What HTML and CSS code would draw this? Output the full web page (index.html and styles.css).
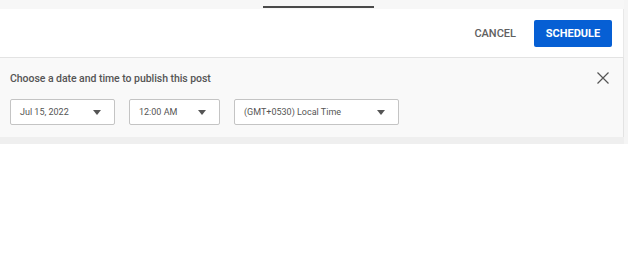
FILE: index.html
```html
<!DOCTYPE html>
<html lang="en">

<head>
    <meta charset="UTF-8">
    <meta name="viewport" content="width=device-width, initial-scale=1.0">
    <title>Schedule Post</title>
    <link rel="stylesheet" href="styles.css">
</head>

<body>
    <div class="frame">
        <div class="sheet">
            <!-- Drag handle -->
            <div class="top-strip">
                <div class="handle"></div>
            </div>

            <!-- Actions -->
            <div class="header">
                <button class="cancel-button">CANCEL</button>
                <button class="schedule-button">SCHEDULE</button>
            </div>

            <!-- Schedule panel -->
            <div class="panel">
                <div class="panel-title-row">
                    <span class="panel-title">Choose a date and time to publish this post</span>
                    <svg class="close-icon" width="12" height="12" viewBox="0 0 12 12">
                        <path d="M0.5 0.5 L11.5 11.5 M11.5 0.5 L0.5 11.5" stroke="#555" stroke-width="1.2" fill="none"/>
                    </svg>
                </div>
                <div class="picker-row">
                    <div class="picker picker-date">
                        <span>Jul 15, 2022</span>
                        <span class="caret"></span>
                    </div>
                    <div class="picker picker-time">
                        <span>12:00 AM</span>
                        <span class="caret"></span>
                    </div>
                    <div class="picker picker-zone">
                        <span>(GMT+0530) Local Time</span>
                        <span class="caret"></span>
                    </div>
                </div>
            </div>
            <div class="bottom-strip"></div>
        </div>
    </div>
</body>

</html>
```

FILE: styles.css
```css
body {
    font-family: Roboto, Arial, sans-serif;
    margin: 0;
    background-color: #fff;
}

.frame {
    background-color: #f5f5f5;
}

.sheet {
    width: 624px;
}

.top-strip {
    height: 9px;
    background-color: #f7f7f7;
    padding-top: 6px;
    box-sizing: border-box;
}

.handle {
    width: 111px;
    height: 2px;
    margin-left: 263px;
    background-color: #4a4a4a;
}

.header {
    height: 48px;
    display: flex;
    align-items: center;
    justify-content: flex-end;
    gap: 8px;
    padding-right: 11px;
    background-color: #fff;
    border-right: 1px solid #e8e8e8;
    border-bottom: 1px solid #e3e3e3;
}

.cancel-button {
    font-family: Roboto, Arial, sans-serif;
    font-size: 11px;
    font-weight: 500;
    color: #606060;
    background: none;
    border: none;
    padding: 0 10px;
    height: 27px;
    cursor: pointer;
}

.schedule-button {
    font-family: Roboto, Arial, sans-serif;
    font-size: 11px;
    font-weight: 700;
    color: #fff;
    background-color: #065fd4;
    border: none;
    border-radius: 2px;
    width: 78px;
    height: 27px;
    padding: 0;
    cursor: pointer;
}

.panel {
    background-color: #f9f9f9;
    border-right: 1px solid #e3e3e3;
    padding: 12px 14px 12px 10px;
}

.panel-title-row {
    display: flex;
    align-items: center;
    justify-content: space-between;
    height: 16px;
    margin-bottom: 13px;
}

.panel-title {
    font-size: 10.5px;
    font-weight: 500;
    letter-spacing: -0.05px;
    color: #555;
}

.picker-row {
    display: flex;
    gap: 14px;
}

.picker {
    height: 26px;
    box-sizing: border-box;
    display: flex;
    align-items: center;
    justify-content: space-between;
    padding: 0 13px 0 9px;
    background-color: #fff;
    border: 1px solid #c4c4c4;
    border-radius: 2px;
    font-size: 9px;
    color: #555;
}

.picker-date {
    width: 105px;
}

.picker-time {
    width: 91px;
}

.picker-zone {
    width: 165px;
}

.caret {
    width: 0;
    height: 0;
    border-left: 4.5px solid transparent;
    border-right: 4.5px solid transparent;
    border-top: 5px solid #555;
}

.bottom-strip {
    height: 7px;
    background-color: #efefef;
}
```
